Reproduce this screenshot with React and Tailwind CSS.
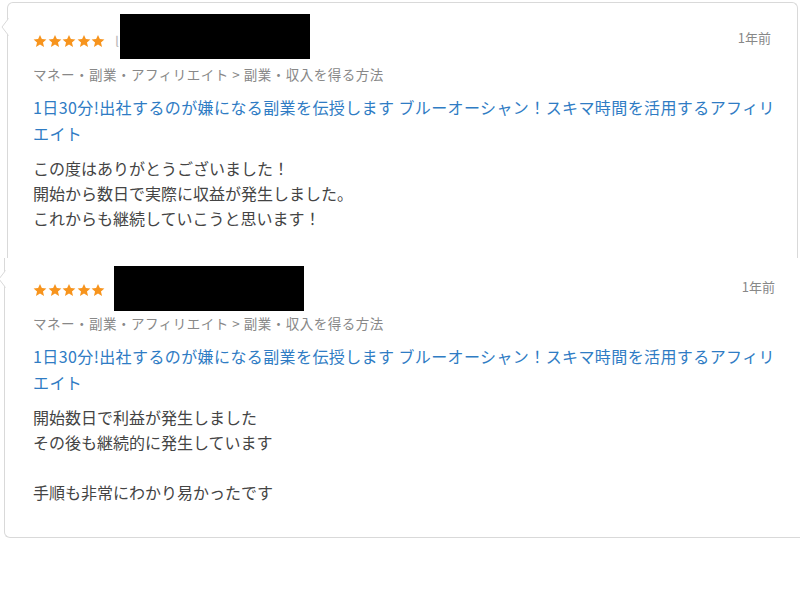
import React from 'react'

const category = 'マネー・副業・アフィリエイト > 副業・収入を得る方法'
const title = '1日30分!出社するのが嫌になる副業を伝授します ブルーオーシャン！スキマ時間を活用するアフィリエイト'

const reviews = [
  {
    lines: ['この度はありがとうございました！', '開始から数日で実際に収益が発生しました。', 'これからも継続していこうと思います！'],
  },
  {
    lines: ['開始数日で利益が発生しました', 'その後も継続的に発生しています', '', '手順も非常にわかり易かったです'],
  },
]

function Star() {
  return (
    <svg width="14" height="14" viewBox="0 0 24 24">
      <path fill="#f7941d" d="M12 1.5l3.2 7.1 7.8.7-5.9 5.2 1.8 7.6L12 18.1l-6.9 4 1.8-7.6L1 9.3l7.8-.7z" />
    </svg>
  )
}

function Tail({ top }) {
  return (
    <svg className="absolute left-[-7px]" style={{ top }} width="8" height="18" viewBox="0 0 8 18">
      <path d="M7.5 0.5 L1 9 L7.5 17.5" fill="white" stroke="#d9d9d9" strokeWidth="1" />
      <rect x="7.5" y="1" width="1" height="16" fill="white" />
    </svg>
  )
}

function ReviewBody({ review, time }) {
  return (
    <>
      <div className="flex h-[18px] items-start">
        <div className="mt-[2px] flex gap-[0.5px]">
          {[0, 1, 2, 3, 4].map((i) => (
            <Star key={i} />
          ))}
        </div>
        <span className="ml-[10px] text-[14px] leading-[18px] text-[#bbb]">l</span>
        <span className="ml-auto mr-[26px] mt-[-3px] text-[13px] leading-[18px] text-[#888]">{time}</span>
      </div>
      <div className="mt-[14px] text-[13.5px] leading-[20px] tracking-[0.5px] text-[#888]">{category}</div>
      <div className="mt-[10px] max-w-[745px] text-[16px] leading-[26px] tracking-[0.4px] text-[#2f7cc4]">{title}</div>
      <div className="mt-[10px] text-[16px] leading-[25px] text-[#444]">
        {review.lines.map((l, i) => (
          <div key={i} className="h-[25px]">{l}</div>
        ))}
      </div>
    </>
  )
}

export default function App() {
  return (
    <div className="h-[600px] w-[800px] overflow-hidden bg-white" style={{ fontFamily: '"Noto Sans CJK JP", "Noto Sans", sans-serif' }}>
      {/* first card, cut off at the bottom */}
      <div className="relative ml-[7px] mt-[2px] h-[256px] w-[791px] rounded-t-[6px] border border-b-0 border-[#d9d9d9] pl-[25px] pt-[29px]">
        <Tail top={15} />
        <ReviewBody review={reviews[0]} time="1年前" />
        <div className="absolute left-[112px] top-[11px] h-[45px] w-[190px] bg-black" />
      </div>

      {/* second card, runs off the right edge */}
      <div className="relative ml-[4px] h-[280px] w-[800px] rounded-bl-[6px] border-b border-l border-[#d9d9d9] pl-[28px] pr-[3px] pt-[23px]">
        <Tail top={12} />
        <ReviewBody review={reviews[1]} time="1年前" />
        <div className="absolute left-[109px] top-[8px] h-[45px] w-[190px] bg-black" />
      </div>
    </div>
  )
}
